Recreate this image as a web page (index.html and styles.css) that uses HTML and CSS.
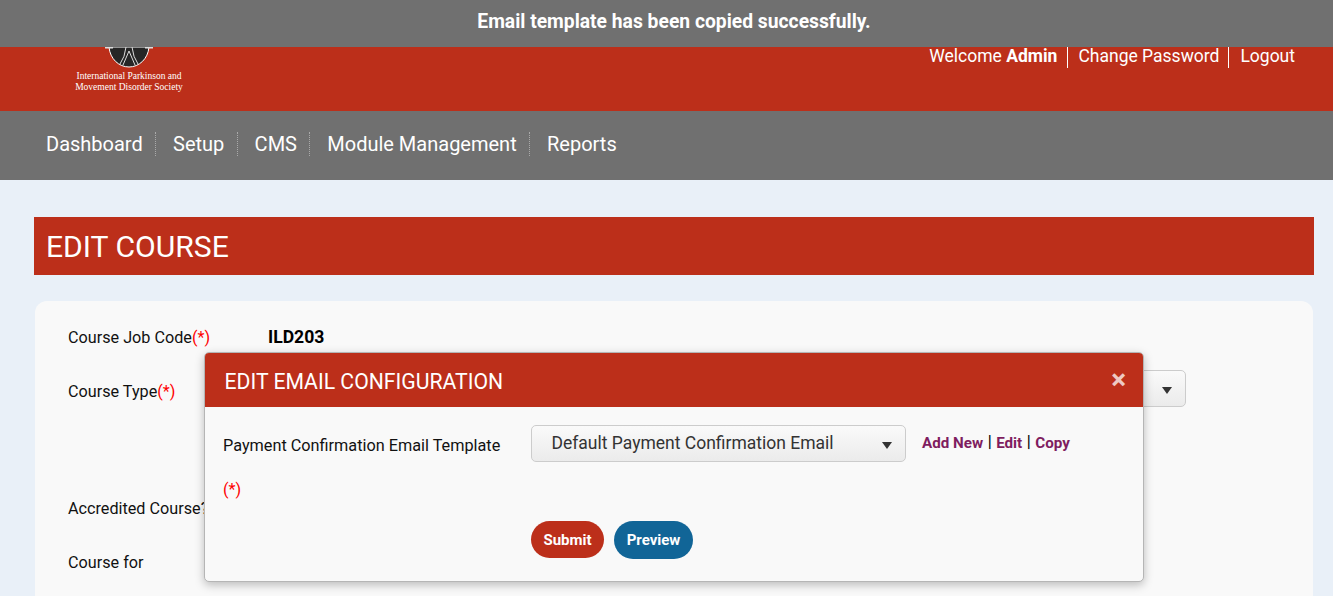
FILE: index.html
```html
<!DOCTYPE html>
<html lang="en">
<head>
    <meta charset="UTF-8">
    <title>Edit Course</title>
    <link rel="stylesheet" href="styles.css">
</head>
<body>
    <div class="notice">Email template has been copied successfully.</div>

    <header class="site-header">
        <div class="logo">
            <svg class="logo-mark" width="48" height="24" viewBox="0 0 48 24">
                <path d="M4 0 C5 12 14 20 24 20 C34 20 43 12 44 0 Z" fill="#262626" stroke="#fff" stroke-width="1"/>
                <path d="M0 0.7 H8 M40 0.7 H48" stroke="#ddd" stroke-width="1.4"/>
                <path d="M21 0 Q20 10 15 17 M27 0 Q28 10 33 17 M24 4 L18 18 M24 4 L30 18" fill="none" stroke="#ddd" stroke-width="1"/>
            </svg>
            <div class="logo-text">International Parkinson and<br>Movement Disorder Society</div>
        </div>
        <div class="user-links">
            <span class="user-link">Welcome <b>Admin</b></span>
            <a class="user-link" href="#">Change Password</a>
            <a class="user-link" href="#">Logout</a>
        </div>
    </header>

    <nav class="main-nav">
        <a href="#">Dashboard</a>
        <a href="#">Setup</a>
        <a href="#">CMS</a>
        <a href="#">Module Management</a>
        <a href="#">Reports</a>
    </nav>

    <main class="content">
        <h1 class="page-title">EDIT COURSE</h1>
        <div class="card">
            <div class="form-row">
                <label>Course Job Code<span class="req">(*)</span></label>
                <strong class="job-code">ILD203</strong>
            </div>
            <div class="form-row type-row">
                <label>Course Type<span class="req">(*)</span></label>
                <div class="select wide"><span class="arrow"></span></div>
            </div>
            <div class="form-row accredited-row">
                <label>Accredited Course?</label>
            </div>
            <div class="form-row">
                <label>Course for</label>
            </div>
        </div>
    </main>

    <div class="modal">
        <div class="modal-head">
            <h2>EDIT EMAIL CONFIGURATION</h2>
            <span class="close">&times;</span>
        </div>
        <div class="modal-body">
            <div class="modal-row">
                <label class="modal-label">Payment Confirmation Email Template <span class="req">(*)</span></label>
                <div class="select template">Default Payment Confirmation Email<span class="arrow"></span></div>
                <div class="template-links">
                    <a href="#">Add New</a><span>|</span><a href="#">Edit</a><span>|</span><a href="#">Copy</a>
                </div>
            </div>
            <div class="modal-actions">
                <button class="btn btn-red">Submit</button>
                <button class="btn btn-blue">Preview</button>
            </div>
        </div>
    </div>
</body>
</html>
```

FILE: styles.css
```css
body {
    font-family: Roboto, Arial, sans-serif;
    background: #e9f0f8;
    margin: 0;
    height: 596px;
    overflow: hidden;
    position: relative;
    color: #111;
}

a {
    color: inherit;
    text-decoration: none;
}

.notice {
    position: absolute;
    top: 0;
    left: 0;
    right: 0;
    height: 47px;
    line-height: 43px;
    padding-left: 15px;
    background: #707070;
    color: #fff;
    font-size: 19.3px;
    font-weight: 700;
    text-align: center;
}

.site-header {
    height: 111px;
    background: #bc2f1a;
    display: flex;
    justify-content: space-between;
    box-sizing: border-box;
    padding: 46px 27px 0 75px;
    color: #fff;
}

.logo {
    width: 108px;
    display: flex;
    flex-direction: column;
    align-items: center;
}

.logo-mark {
    flex: none;
    margin-top: 1px;
}

.logo-text {
    font-family: "Liberation Serif", serif;
    font-size: 9.5px;
    line-height: 11px;
    text-align: center;
    white-space: nowrap;
}

.user-links {
    display: flex;
    font-size: 17.5px;
    line-height: 20px;
}

.user-link {
    padding: 0 10px;
    border-right: 1px solid #fff;
    height: 22px;
}

.user-link + .user-link {
    padding-right: 9px;
}

.user-link:last-child {
    border-right: none;
    padding: 0 11px;
}

.main-nav {
    height: 65px;
    padding: 0 0 4px 33px;
    background: #707070;
    display: flex;
    align-items: center;
    color: #fff;
    font-size: 20px;
}

.main-nav a {
    padding: 0 12.5px 0 13px;
    line-height: 24px;
    border-right: 1px dotted #aaa;
    margin-right: 3.8px;
}

.main-nav a:first-child {
    padding-right: 12px;
    margin-right: 4.3px;
}

.main-nav a:last-child {
    border-right: none;
}

.content {
    padding: 37px 19px 0 34px;
}

.page-title {
    margin: 0 0 26px;
    height: 58px;
    line-height: 59px;
    background: #bc2f1a;
    color: #fff;
    font-size: 30.1px;
    font-weight: 400;
    padding-left: 12px;
}

.card {
    box-sizing: border-box;
    margin: 0 1px;
    background: #f9f9f9;
    border-radius: 12px 12px 0 0;
    padding: 24px 33px 0;
    height: 295px;
    font-size: 16.2px;
}

.form-row {
    display: flex;
    align-items: center;
    height: 24px;
    margin-bottom: 30px;
}

.form-row:first-child {
    margin-bottom: 24px;
}

.form-row label {
    width: 200px;
    flex: none;
}

.job-code {
    font-size: 17.6px;
    color: #000;
}

.type-row {
    height: 36px;
    margin-bottom: 87px;
}

.req {
    color: #f00;
}

.select {
    box-sizing: border-box;
    height: 37px;
    border: 1px solid #ccc;
    border-radius: 5px;
    background: linear-gradient(to bottom, #fafafa, #ebebeb);
    position: relative;
    color: #333;
}

.select.wide {
    flex: 1;
    margin: -6px 94px 0 0;
}

.arrow {
    position: absolute;
    right: 13px;
    top: 16px;
    width: 0;
    height: 0;
    border-left: 5px solid transparent;
    border-right: 5px solid transparent;
    border-top: 7px solid #333;
}

.modal {
    position: absolute;
    left: 204px;
    top: 352px;
    width: 938px;
    height: 228px;
    background: #f9f9f9;
    border: 1px solid #b5b5b5;
    border-radius: 5px;
    box-shadow: 0 3px 10px rgba(0,0,0,0.25);
    overflow: hidden;
}

.modal-head {
    height: 54px;
    background: #bc2f1a;
    color: #fff;
    display: flex;
    align-items: center;
    justify-content: space-between;
    padding: 0 17px 0 19.5px;
}

.modal-head h2 {
    margin: 2px 0 0;
    font-size: 21.2px;
    font-weight: 400;
}

.close {
    font-size: 28px;
    font-weight: 700;
    line-height: 1;
    color: #eec9c3;
}

.modal-body {
    padding: 18px 18px 0;
}

.modal-row {
    display: flex;
    align-items: flex-start;
}

.modal-label {
    width: 290px;
    margin-right: 18px;
    flex: none;
    font-size: 16.25px;
    line-height: 44px;
    margin-top: -1px;
}

.select.template {
    width: 375px;
    flex: none;
    line-height: 35px;
    padding-left: 19.5px;
    font-size: 17.5px;
}

.template-links {
    display: flex;
    gap: 4.5px;
    margin-left: 16px;
    font-size: 15.2px;
    line-height: 36px;
    color: #000;
}

.template-links a {
    color: #7f1d5f;
    font-weight: 700;
}

.template-links span {
    font-size: 16px;
    font-weight: 500;
    line-height: 34px;
}

.modal-actions {
    display: flex;
    gap: 10px;
    padding-left: 308px;
    margin-top: 9px;
}

.btn {
    height: 37px;
    border: none;
    border-radius: 19px;
    padding: 0 12px;
    color: #fff;
    font-family: Roboto, Arial, sans-serif;
    font-size: 15px;
    font-weight: 700;
}

.btn-red {
    background: #bc2f1a;
    width: 73px;
}

.btn-blue {
    background: #116597;
    height: 38px;
    width: 79px;
}
```
